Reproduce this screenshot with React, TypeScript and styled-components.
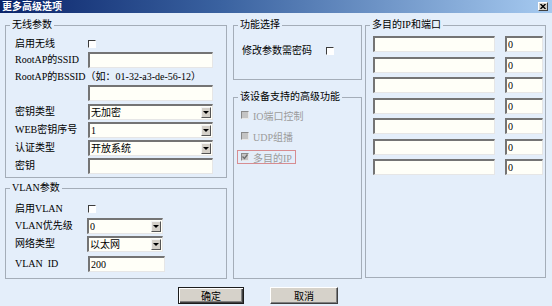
import React from 'react';
import styled, { createGlobalStyle } from 'styled-components';

const GlobalStyle = createGlobalStyle`
  html, body {
    margin: 0;
    padding: 0;
    background: #e4eefa;
  }
  body {
    font-family: "Liberation Serif", "Noto Sans CJK SC", serif;
    font-size: 10px;
    color: #000;
  }
`;

const Window = styled.div`
  width: 552px;
  height: 306px;
  display: flex;
  flex-direction: column;
  background: #e4eefa;
  overflow: hidden;
`;

const TitleBar = styled.div`
  flex: none;
  height: 13px;
  display: flex;
  align-items: center;
  justify-content: space-between;
  padding: 0 4px 0 2px;
  background: linear-gradient(90deg, #0a246a 0%, #3a62a0 40%, #a6caf0 100%);
`;

const Title = styled.span`
  color: #fff;
  font-weight: bold;
  font-size: 10px;
  line-height: 13px;
`;

const CloseBtn = styled.span`
  box-sizing: border-box;
  width: 10px;
  height: 9px;
  display: flex;
  align-items: center;
  justify-content: center;
  background: #d4d0c8;
  border-style: solid;
  border-width: 1px;
  border-color: #fff #404040 #404040 #fff;
`;

const Body = styled.div`
  flex: none;
  display: flex;
  padding: 6px 0 0 5px;
`;

const Column = styled.div<{ $w: number; $gap: number; $mr?: number }>`
  width: ${p => p.$w}px;
  margin-right: ${p => p.$mr || 0}px;
  display: flex;
  flex-direction: column;
  gap: ${p => p.$gap}px;
`;

const GroupBox = styled.fieldset<{ $h: number }>`
  box-sizing: border-box;
  height: ${p => p.$h}px;
  margin: 0;
  padding: 0;
  min-width: 0;
  border: 1px solid #a4adb8;
`;

const Legend = styled.legend`
  padding: 0 2px;
  margin-left: 4px;
  font-size: 10px;
  line-height: 12px;
`;

const Inner = styled.div<{ $pt: number; $pl: number; $gap?: number }>`
  display: flex;
  flex-direction: column;
  align-items: flex-start;
  padding: ${p => p.$pt}px 0 0 ${p => p.$pl}px;
  gap: ${p => p.$gap || 0}px;
`;

const Row = styled.div<{ $h?: number; $mt?: number }>`
  display: flex;
  align-items: center;
  height: ${p => p.$h || 16}px;
  margin-top: ${p => p.$mt || 0}px;
  white-space: nowrap;
`;

const Label = styled.span<{ $w: number }>`
  width: ${p => p.$w}px;
  flex: none;
  line-height: 12px;
`;

const CheckBox = styled.span<{ $disabled?: boolean }>`
  box-sizing: border-box;
  width: 8px;
  height: 8px;
  flex: none;
  display: flex;
  align-items: center;
  justify-content: center;
  border-style: solid;
  border-width: 1px;
  border-color: ${p => (p.$disabled ? '#8a8a8a #e8e8e8 #e8e8e8 #8a8a8a' : '#3c3c3c #fff #fff #3c3c3c')};
  background: ${p => (p.$disabled ? '#c4c4c4' : '#fff')};
`;

const TextBox = styled.input<{ $w: number }>`
  box-sizing: border-box;
  width: ${p => p.$w}px;
  height: 16px;
  margin: 0;
  padding: 0 0 0 1px;
  font: inherit;
  font-size: 10px;
  color: #000;
  background: #fffff8;
  border-style: solid;
  border-width: 2px 1px 1px 2px;
  border-color: #747474 #e6e6e6 #e6e6e6 #747474;
  outline: none;
`;

const SelectBox = styled.div<{ $w: number }>`
  box-sizing: border-box;
  width: ${p => p.$w}px;
  height: 16px;
  display: flex;
  align-items: center;
  background: #fffff8;
  border-style: solid;
  border-width: 2px 1px 1px 2px;
  border-color: #747474 #e6e6e6 #e6e6e6 #747474;
`;

const SelectValue = styled.span`
  flex: 1;
  padding-left: 1px;
  line-height: 12px;
`;

const DropButton = styled.span`
  box-sizing: border-box;
  width: 10px;
  height: 11px;
  margin-right: 1px;
  display: flex;
  align-items: center;
  justify-content: center;
  background: #d4d0c8;
  border-style: solid;
  border-width: 1px;
  border-color: #f4f4f4 #555 #555 #f4f4f4;
`;

const Feature = styled.div<{ $focus?: boolean }>`
  box-sizing: border-box;
  height: 14px;
  display: flex;
  align-items: center;
  gap: 4px;
  padding: 0 3px;
  border: 1px solid ${p => (p.$focus ? '#d78d91' : 'transparent')};
  color: #9c9c9c;
  white-space: nowrap;
`;

const PortRow = styled.div`
  display: flex;
  gap: 10px;
  height: 16px;
`;

const Footer = styled.div`
  display: flex;
  align-items: flex-start;
  gap: 26px;
  padding: 8px 0 0 178px;
`;

const Button = styled.div<{ $w: number; $default?: boolean }>`
  box-sizing: border-box;
  width: ${p => p.$w}px;
  height: 17px;
  display: flex;
  align-items: center;
  justify-content: center;
  background: #d6d2ca;
  border: 1px solid;
  border-color: ${p => (p.$default ? '#1c1c1c' : '#fff #404040 #404040 #fff')};
  box-shadow: ${p =>
    p.$default
      ? 'inset 1px 1px 0 #fff, inset -1px -1px 0 #404040, inset -2px -2px 0 #808080'
      : 'inset -1px -1px 0 #808080'};
  font-size: 10px;
`;

const Arrow = () => (
  <svg width="6" height="4" viewBox="0 0 6 4">
    <path d="M0 0h6L3 3z" fill="#000" />
  </svg>
);

const Tick = () => (
  <svg width="6" height="6" viewBox="0 0 6 6">
    <path d="M0.5 2.5l2 2 3-4" fill="none" stroke="#6e6e6e" strokeWidth="1.3" />
  </svg>
);

const Select = ({ w, value }: { w: number; value: string }) => (
  <SelectBox $w={w}>
    <SelectValue>{value}</SelectValue>
    <DropButton>
      <Arrow />
    </DropButton>
  </SelectBox>
);

const ports = [0, 1, 2, 3, 4, 5, 6];

export default function App() {
  return (
    <Window>
      <GlobalStyle />
      <TitleBar>
        <Title>更多高级选项</Title>
        <CloseBtn>
          <svg width="6" height="5" viewBox="0 0 6 5">
            <path d="M0.5 0l5 5M5.5 0l-5 5" stroke="#000" strokeWidth="1.4" />
          </svg>
        </CloseBtn>
      </TitleBar>

      <Body>
        <Column $w={222} $gap={4} $mr={6}>
          <GroupBox $h={159}>
            <Legend>无线参数</Legend>
            <Inner $pt={5} $pl={9}>
              <Row>
                <Label $w={73}>启用无线</Label>
                <CheckBox />
              </Row>
              <Row>
                <Label $w={73}>RootAP的SSID</Label>
                <TextBox $w={125} readOnly />
              </Row>
              <Row $h={17}>
                <Label $w={205}>RootAP的BSSID（如：01-32-a3-de-56-12）</Label>
              </Row>
              <Row>
                <Label $w={73} />
                <TextBox $w={125} readOnly />
              </Row>
              <Row $mt={3}>
                <Label $w={73}>密钥类型</Label>
                <Select w={125} value="无加密" />
              </Row>
              <Row $mt={2}>
                <Label $w={73}>WEB密钥序号</Label>
                <Select w={125} value="1" />
              </Row>
              <Row $mt={2}>
                <Label $w={73}>认证类型</Label>
                <Select w={125} value="开放系统" />
              </Row>
              <Row $mt={2}>
                <Label $w={73}>密钥</Label>
                <TextBox $w={125} readOnly />
              </Row>
            </Inner>
          </GroupBox>

          <GroupBox $h={97}>
            <Legend>VLAN参数</Legend>
            <Inner $pt={7} $pl={9}>
              <Row>
                <Label $w={73}>启用VLAN</Label>
                <CheckBox />
              </Row>
              <Row $mt={1}>
                <Label $w={72}>VLAN优先级</Label>
                <Select w={76} value="0" />
              </Row>
              <Row $mt={2}>
                <Label $w={72}>网络类型</Label>
                <Select w={76} value="以太网" />
              </Row>
              <Row $mt={4}>
                <Label $w={73}>VLAN&nbsp;&nbsp;ID</Label>
                <TextBox $w={77} readOnly value="200" />
              </Row>
            </Inner>
          </GroupBox>
        </Column>

        <Column $w={129} $gap={11} $mr={3}>
          <GroupBox $h={61}>
            <Legend>功能选择</Legend>
            <Inner $pt={12} $pl={8}>
              <Row>
                <Label $w={84}>修改参数需密码</Label>
                <CheckBox />
              </Row>
            </Inner>
          </GroupBox>

          <GroupBox $h={188}>
            <Legend>该设备支持的高级功能</Legend>
            <Inner $pt={5} $pl={3} $gap={7}>
              <Feature>
                <CheckBox $disabled />
                <span>IO端口控制</span>
              </Feature>
              <Feature>
                <CheckBox $disabled />
                <span>UDP组播</span>
              </Feature>
              <Feature $focus>
                <CheckBox $disabled>
                  <Tick />
                </CheckBox>
                <span>多目的IP</span>
              </Feature>
            </Inner>
          </GroupBox>
        </Column>

        <Column $w={181} $gap={0}>
          <GroupBox $h={259}>
            <Legend>多目的IP和端口</Legend>
            <Inner $pt={5} $pl={7} $gap={4.5}>
              {ports.map(i => (
                <PortRow key={i}>
                  <TextBox $w={122} readOnly />
                  <TextBox $w={38} readOnly value="0" />
                </PortRow>
              ))}
            </Inner>
          </GroupBox>
        </Column>
      </Body>

      <Footer>
        <Button $w={66} $default>
          确定
        </Button>
        <Button $w={68}>取消</Button>
      </Footer>
    </Window>
  );
}
